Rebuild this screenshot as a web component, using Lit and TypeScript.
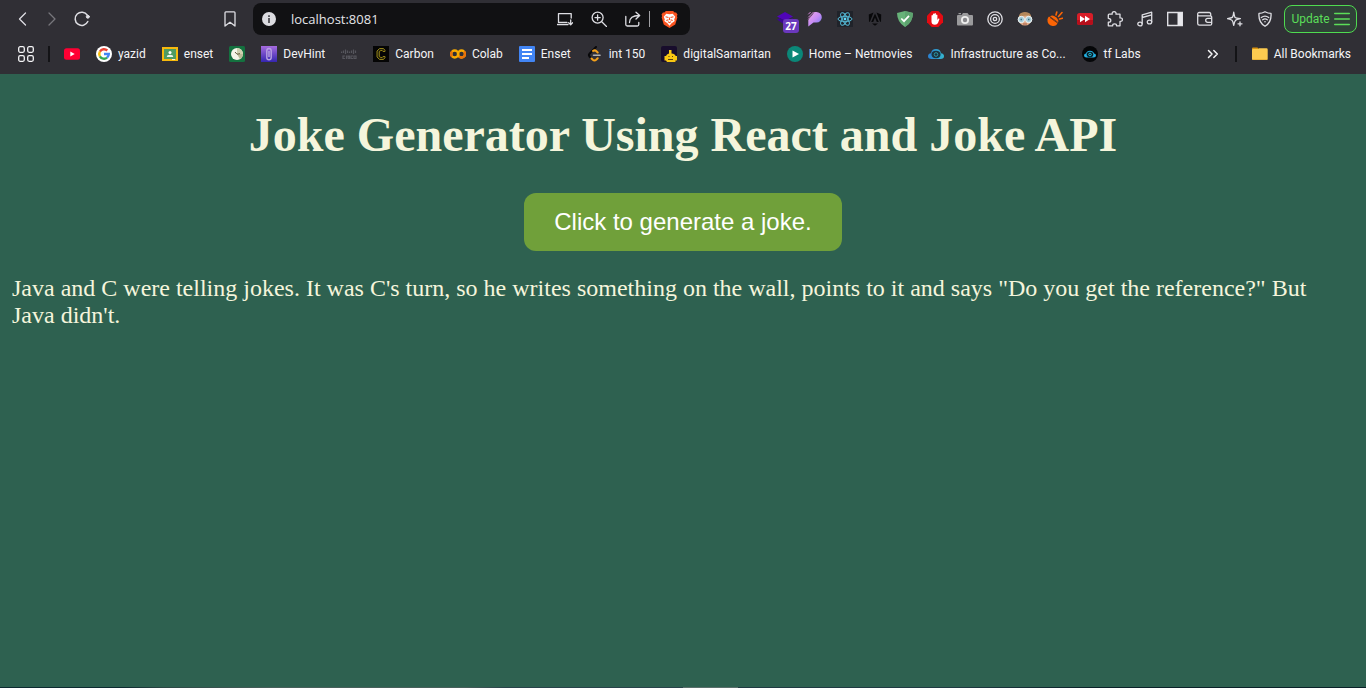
import { LitElement, html, css, svg } from "lit";
import { customElement, state } from "lit/decorators.js";

const line = (body: unknown, size = 16) => html`<svg viewBox="0 0 16 16" width=${size} height=${size} fill="none" stroke="currentColor" stroke-width="1.3" stroke-linecap="round" stroke-linejoin="round" aria-hidden="true">${body}</svg>`;
const art = (body: unknown, size = 16) => html`<svg viewBox="0 0 16 16" width=${size} height=${size} aria-hidden="true">${body}</svg>`;

const ui = {
  back: line(svg`<path d="M11.5 2 5.500 8l6 6"/>`),
  forward: line(svg`<path d="M5 2 11 8l-6 6"/>`),
  reload: line(svg`<path stroke-width="1.500" d="M13.800 10.500A6.600 6.600 0 1 1 13.300 4.200"/><circle cx="13.800" cy="5.700" r="1.500" fill="currentColor" stroke-width="1"/>`),
  bookmark: line(svg`<path d="M3 1.800q0-.9.900-.9h8.200q.9 0 .9.900v13.300L8 11.200l-5 3.900z"/>`),
  info: art(svg`<circle cx="8" cy="8" r="7" fill="#dcdce0"/><path d="M7 4.200h2v1.800H7zM7 7h2v5H7z" fill="#5b5b60"/>`),
  install: line(svg`<path d="M14.200 7V2.600H1.500v8.800h8M.5 13.500h10.500M13.700 9v4.700m-2-2 2 2 2-2M2 11.400h8"/>`),
  magnify: line(svg`<circle cx="6.600" cy="6.600" r="5.500"/><path d="M11 11l4.500 4.500M4 6.600h5.200M6.600 4v5.200"/>`),
  share: line(svg`<path d="M.8 5.500v8q0 1.500 1.500 1.500h10q1.500 0 1.500-1.500v-2M4.500 11.500q0-7 9.500-7M11 1.300l3.700 3.200L11 8"/>`),
  brave: art(svg`<path d="M4.600 0h6.800l1.400 1.500 1.400-.1 1.300 2-.5 1.400.4 1.400-2 6.400L8 16l-5.400-3.400-2-6.400L1 4.800.5 3.400l1.300-2 1.400.1z" fill="#fb5420"/><path d="M5 2.500l3 .5 3-.5 2.400 3-1 2.500.5 1.500-3 2L8 13.800 6.100 11.500l-3-2L3.600 8l-1-2.500z" fill="#fff"/><path d="M4.300 5.500l2.700.6M11.700 5.500L9 6.100M5 9l2-.7M11 9l-2-.7M8 6v2.500M6.500 10L8 11l1.500-1" stroke="#fb5420" stroke-width="1" fill="none"/>`, 17),
  apps: line(svg`<rect x=".7" y=".7" width="5.600" height="5.600" rx="1.500"/><rect x="9.700" y=".7" width="5.600" height="5.600" rx="1.500"/><rect x=".7" y="9.700" width="5.600" height="5.600" rx="1.500"/><rect x="9.700" y="9.700" width="5.600" height="5.600" rx="1.500"/>`),
  more: line(svg`<path stroke-width="1.500" d="M3.500 4.500 7 8l-3.500 3.500M8.800 4.500 12.300 8l-3.500 3.500"/>`),
  menu: line(svg`<path stroke-width="1.400" d="M.7 2.500h14.600M.7 8h14.600M.7 13.500h14.600"/>`),
  folder: art(svg`<path d="M0 2.500Q0 1.500 1 1.500h4.500l1.600 2H0z" fill="#d99410"/><path d="M0 3.800q0-.8.800-.8H6l1.200-.8h7.300q1.200 0 1.200 1.200V13q0 1-1 1H1q-1 0-1-1z" fill="#fccb50"/><path d="M1 13.500h14" stroke="#e9b43a"/>`),
};

const extensions: [string, unknown][] = [
  ["Layers", art(svg`<path d="M0 5.500 8 1l8 4.500L8 10z" fill="#5005b8"/><path d="M0 8.500l3-1.500 5 3 8-3v2L8 14z" fill="#3a0790"/>`)],
  ["Pieces", art(svg`<defs><linearGradient id="pp" x1="0" y1="0" x2="1" y2="1"><stop offset="0" stop-color="#f0a9e6"/><stop offset=".5" stop-color="#c78cf5"/><stop offset="1" stop-color="#6d7bf2"/></linearGradient></defs><path d="M7.500 1H9.500a5.300 5.300 0 0 1 0 10.600H6.500L1.300 15.500V9z" fill="url(#pp)"/><path d="M1.300 3.300 3.600 1M1.300 6.300 6.600 1M1.300 8.300 5 4.600" stroke="#d88bdc" stroke-width="1"/>`)],
  ["React Developer Tools", art(svg`<path d="M0 0h16v16H0z" fill="#20232a"/><g fill="none" stroke="#54b8d4"><ellipse cx="8" cy="8" rx="7" ry="2.700"/><ellipse cx="8" cy="8" rx="7" ry="2.700" transform="rotate(60 8 8)"/><ellipse cx="8" cy="8" rx="7" ry="2.700" transform="rotate(120 8 8)"/></g><circle cx="8" cy="8" r="1.400" fill="#61dafb"/>`)],
  ["Angular DevTools", art(svg`<path d="M1.800 3.500 6.500 1.500 3 10.500 2 11zM14.200 3.500 9.500 1.500l3.500 9 1 .5zM8 2.500l3.800 8.500H9.800L8 6.500 6.200 11H4.200zM5 12.500h6L8 14.800z" fill="#08080a"/>`)],
  ["AdGuard", art(svg`<path d="M8 0q4 .9 8 2-.2 9.500-8 14Q.2 11.500 0 2 4 .9 8 0z" fill="#67b279"/><path d="M8 0q4 .9 8 2-.2 9.500-8 14z" fill="#5da36f"/><path d="M4.300 7.500 7 10.200l5-5.400" fill="none" stroke="#fff" stroke-width="1.700"/>`)],
  ["Ad blocker", art(svg`<path d="M4.700 0h6.600L16 4.700v6.600L11.300 16H4.700L0 11.300V4.700z" fill="#e40b12"/><path d="M4.500 8V4.500q.8-1 1.400 0V3q.8-1 1.500 0v-.5q.8-1 1.500 0V4q.8-1 1.500 0v5l1-1.500q1.200-.4 1 .8L11 12Q10 13.800 8 13.800q-3.500 0-3.500-3z" fill="#fff"/>`)],
  ["Screenshot", art(svg`<path d="M1 4h3.500L6 2h4.500L12 4h3q1 0 1 1v8.500q0 1-1 1H1q-1 0-1-1V5q0-1 1-1zM1.500 2h2.500v1.300H1.500z" fill="#9a9a9c"/><circle cx="8" cy="9" r="4" fill="#eee"/><circle cx="8" cy="9" r="2.200" fill="#88888c"/>`)],
  ["Rings", line(svg`<circle cx="8" cy="8" r="7.200"/><circle cx="8" cy="8" r="4.400"/><circle cx="8" cy="8" r="1.700"/>`)],
  ["Persona", art(svg`<circle cx="8" cy="8" r="6.600" fill="#e0ac88"/><path d="M1.700 7Q1.500 1 8 1t6.300 6L12 4.500 4 5z" fill="#b4875a"/><circle cx="4.300" cy="8.500" r="3.200" fill="#a8ccd8" stroke="#edf3f4"/><circle cx="11.700" cy="8.500" r="3.200" fill="#a8ccd8" stroke="#edf3f4"/><path d="M3.500 8.500h1.500M11 8.500h1.500" stroke="#3b7284" stroke-width="1.500"/><path d="M6 13h4" stroke="#a65f4a"/>`)],
  ["Honey pot", art(svg`<path d="M2 5.500 10.800 11.500Q9.500 15.500 5.500 15 0 13.800.5 8.500q.3-2 1.500-3z" fill="#fb6405"/><path d="M3 5.200Q6 3.500 9 6.300t2.200 5z" fill="#fb6405"/><path d="M3 6.500l7.500 5.500" stroke="#4a2818" stroke-width=".8"/><path d="M9 4 9.800 1M11.500 5.500 15 1.500M12.500 8l3-.7" stroke="#fb6405" stroke-width="1.600" stroke-linecap="round"/>`)],
  ["Video speed", art(svg`<rect y="2" width="16" height="12" rx="2.500" fill="#d81e28"/><path d="M0 9h16v2.500q0 2.500-2.500 2.500h-11Q0 14 0 11.500z" fill="#b70f1b"/><path d="M3 4.800 8 8l-5 3.200zM8 4.800 13 8l-5 3.200z" fill="#fff"/>`)],
  ["Extensions", line(svg`<path d="M2.200 3.200h3q-.4-2.500 1.900-2.500t1.900 2.500h4v3.700q2.400-.3 2.400 1.700T13 10.300v4.500H9.500q.2-2-1.900-2t-1.900 2H1.300v-3.600q2.500.2 2.500-1.800T1.300 7.300V4.100q0-.9.900-.9z"/>`)],
  ["Music", line(svg`<path d="M5.200 12.500V3.800L14.700 1.200v9.500M5.200 6.500l9.500-2.600"/><ellipse cx="3" cy="13" rx="2.200" ry="1.900"/><ellipse cx="12.500" cy="11" rx="2.200" ry="1.900"/>`)],
  ["Sidebar", art(svg`<path d="M.7 1.500h14.600v13H.7z" fill="none" stroke="#dedee3" stroke-width="1.400"/><path d="M10.500 1.500h4.800v13h-4.800z" fill="#e8e8ec"/>`)],
  ["Wallet", line(svg`<path d="M13.700 4.800V3q0-1.500-1.500-1.500H2.300Q.7 1.500.7 3v9.500q0 1.700 1.700 1.700h10.800q1.500 0 1.500-1.500V6.300q0-1.500-1.500-1.500H2Q.7 4.800.7 3.500M14.500 7.300H10.700a2 2 0 0 0 0 4h3.800"/>`)],
  ["Leo AI", line(svg`<path d="M6.700 1.200q.8 4.700 1.400 5.300t5.300 1.200q-4 .8-4.800 1.600-1 1-1.900 5-.8-4-1.600-4.900T.5 7.700q3.800-.6 4.800-1.300 1-.8 1.400-5.200z"/><path d="M13 10.800v4M11 12.800h4"/>`)],
  ["VPN", line(svg`<path d="M8 .7q3 1.600 6 1.600.8 9-6 13-6.800-4-6-13 3 0 6-1.600z"/><path d="M4.300 6.500Q8 3.700 11.700 6.500M5.700 8.800q2.300-1.800 4.600 0"/><circle cx="8" cy="10.800" r=".8" fill="currentColor" stroke="none"/>`)],
];

const bookmarks: { label?: string; title: string; icon: unknown }[] = [
  { title: "YouTube", icon: art(svg`<rect y="2.300" width="16" height="11.400" rx="2.500" fill="#ff0033"/><path d="M6.300 5.500 10.700 8l-4.400 2.500z" fill="#fff"/>`) },
  { label: "yazid", title: "yazid", icon: art(svg`<circle cx="8" cy="8" r="8" fill="#fff"/><g fill="none" stroke-width="2.400"><path d="M11.300 4.500A4.800 4.800 0 0 0 3.900 5.600" stroke="#ea4335"/><path d="M3.900 5.600a4.800 4.800 0 0 0 0 4.800" stroke="#fbbc05"/><path d="M3.900 10.400a4.800 4.800 0 0 0 7.200 1.200" stroke="#34a853"/><path d="M11.100 11.600Q12.800 10 12.800 8H8" stroke="#4285f4"/></g>`) },
  { label: "enset", title: "enset", icon: art(svg`<path d="M0 1h16v14H0z" fill="#f7b90d"/><path d="M2 3h12v10H2z" fill="#4e9b62"/><circle cx="8" cy="6.500" r="1.500" fill="#fff"/><path d="M4.800 11q0-2.200 3.200-2.200t3.200 2.200z" fill="#e8f3eb"/><path d="M10 13h3v1h-3z" fill="#fff3ca"/>`) },
  { title: "Clock", icon: art(svg`<rect width="16" height="16" rx="1.500" fill="#14713f"/><circle cx="8" cy="8" r="6" fill="#f5f5e9"/><path d="M8 8V2a6 6 0 0 1 6 6z" fill="#cfd0b0"/><path d="M8 8h6a6 6 0 0 1-3 5.200z" fill="#b9ba98"/><path d="M6 6l2 2.200 3-.5" stroke="#655d3e" fill="none"/>`) },
  { label: "DevHint", title: "DevHint", icon: art(svg`<defs><linearGradient id="dh" x1="0" y1="0" x2="0" y2="1"><stop stop-color="#a66cdf"/><stop offset="1" stop-color="#3526b0"/></linearGradient></defs><path d="M0 0h16v16H0z" fill="url(#dh)"/><path d="M5.800 10.500V4.700a2.200 2.200 0 0 1 4.400 0v6.800a2.200 2.200 0 0 1-4.400 0zM8 5v6" stroke="#b7a2e2" stroke-width="1.400" fill="none"/>`) },
  { title: "Cisco", icon: art(svg`<g stroke="#56565d" stroke-width="1.200"><path d="M.6 5.500v1.500M2.500 4.500V7M4.500 3.500V8M6.500 4.500V7M8.500 5.500V7M10.500 4.500V7M12.500 3.500V8M14.500 4.500V7"/><path fill="none" d="M4 10H2v2.500h2M5.500 9.500V13M9 10H7v1.200h1.500v1.300H6.700M12 10h-2v2.500h2M13 10h2v2.500h-2z"/></g>`) },
  { label: "Carbon", title: "Carbon", icon: art(svg`<path d="M0 0h16v16H0z" fill="#050505"/><path d="M12 5.500V4.300L10.500 2.500h-4L4 5v6l2.500 2.500h4l1.500-1.800v-1.200h-2l-.8 1H7.500L6.300 10V6l1.200-1.500h1.700l.8 1z" fill="#24200a" stroke="#8f8018"/>`) },
  { label: "Colab", title: "Colab", icon: art(svg`<g fill="none" stroke-width="2.400"><circle cx="4.700" cy="8" r="3.500" stroke="#f9ab00"/><path d="M2.200 10.500a3.500 3.500 0 0 1 0-5" stroke="#e8710a"/><circle cx="11.500" cy="8" r="3.500" stroke="#f9ab00"/><path d="M14 5.500a3.500 3.500 0 0 1-5 5" stroke="#e8710a"/></g>`) },
  { label: "Enset", title: "Enset", icon: art(svg`<rect width="16" height="16" rx="1" fill="#4285f4"/><path d="M3 4h10M3 8h10M3 12h7" stroke="#fff" stroke-width="1.900"/>`) },
  { label: "int 150", title: "int 150", icon: art(svg`<path d="M9 1 2.500 7.800q-1.200 1.300 0 2.700l1.500 1.700" fill="none" stroke="#09090b" stroke-width="2" stroke-linecap="round"/><path d="M6 5q1.700-1.300 3.200.1l1.500 1.400M4.500 12.500l1.300 1.200q1.700 1.500 3.400 0l1.500-1.500" fill="none" stroke="#f5a11b" stroke-width="2" stroke-linecap="round"/><path d="M6.500 9.200h6.500" stroke="#b3b3b3" stroke-width="1.600" stroke-linecap="round"/>`) },
  { label: "digitalSamaritan", title: "digitalSamaritan", icon: art(svg`<rect width="16" height="16" rx="2" fill="#180d2c"/><path d="M8 4h2.500v3.500q4 .5 4 2.500H16v4.500h-1.500V16H6l-1-1.500H3.500V10H5q.5-2 3-2.500z" fill="#f9c712"/><path d="M7.500 10.500h1M11 10.500h1M7 13.500h5" stroke="#5b4110"/>`) },
  { label: "Home – Netmovies", title: "Home – Netmovies", icon: art(svg`<circle cx="8" cy="8" r="8" fill="#0b8778"/><path d="M5.500 4.500 12 8l-6.500 3.500z" fill="#fff"/>`) },
  { label: "Infrastructure as Co...", title: "Infrastructure as Code", icon: art(svg`<defs><linearGradient id="cl"><stop stop-color="#2a7fd0"/><stop offset="1" stop-color="#35b6cf"/></linearGradient></defs><path d="M3.500 13Q0 12.800 0 10.200T3 7.300Q3.700 3 8 3t5 4.300q3 .3 3 2.900T12.500 13z" fill="url(#cl)"/><ellipse cx="8" cy="8.500" rx="4.500" ry="3.700" fill="#1c3440"/><circle cx="8" cy="8.500" r="1.800" fill="none" stroke="#2e98a8"/>`) },
  { label: "tf Labs", title: "tf Labs", icon: art(svg`<circle cx="8" cy="8" r="8" fill="#050608"/><path d="M4.500 11.500q-2.500 0-2.500-2t2-2Q4.800 4.700 8 4.700t4 2.800q2 0 2 2t-2.500 2z" fill="#22aee0"/><ellipse cx="8" cy="8.500" rx="3.300" ry="2.700" fill="#071c26"/><circle cx="8" cy="8.500" r="1.300" fill="none" stroke="#25bbd2"/>`) },
];

@customElement("browser-toolbar")
export class BrowserToolbar extends LitElement {
  static styles = css`
    :host { display: block; background: #302f35; color: #dedee3; font: 12px/16px Roboto, "Noto Sans", sans-serif; }
    svg { display: block; flex: none; }
    button { border: 0; padding: 0; margin: 0; background: none; color: inherit; font: inherit; }
    .bar { display: flex; align-items: center; height: 38px; padding: 0 9px 0 7px; }
    .tool { display: flex; flex: none; align-items: center; justify-content: center; width: 30px; height: 30px; position: relative; }
    .dim { color: #77767c; }
    .lead { flex: 118 1 0; }
    .trail { flex: 80 1 0; }
    .address { flex: 417 1 0; min-width: 0; display: flex; align-items: center; height: 32px; margin-left: 8px; padding: 0 12px 0 8px; box-sizing: border-box; border-radius: 8px; background: #111113; }
    .address input { flex: 1; min-width: 0; margin: 0 0 0 14px; padding: 0; border: 0; outline: 0; background: none; color: #e4e4e8; font: 13px/20px "Open Sans", "Noto Sans", sans-serif; }
    .actions { display: flex; gap: 18px; padding-right: 8px; }
    .rule { width: 1px; height: 16px; background: #a0a0a4; margin-right: 11px; }
    .badge { position: absolute; left: 13px; top: 15px; width: 16px; height: 14px; border-radius: 3px; background: #6a38bd; color: #fff; font: 700 10px/14px "Open Sans", sans-serif; text-align: center; }
    .update { display: flex; align-items: center; justify-content: center; gap: 4px; box-sizing: border-box; flex: none; width: 73px; height: 28px; margin-left: 4px; border: 1px solid #4fdb50; border-radius: 8px; background: #304138; color: #5bde58; }
    .shelf { display: flex; align-items: center; height: 32px; padding: 0 15px 4px 18px; color: #f4f4f6; }
    .split { width: 2px; height: 16px; background: #131316; }
    .apps { margin-right: 14px; }
    .marks { display: flex; flex: 1; min-width: 0; overflow: hidden; gap: 16px; margin-left: 14px; }
    .mark { display: flex; flex: none; align-items: center; gap: 6px; color: inherit; text-decoration: none; white-space: nowrap; }
    .more { margin-right: 14px; }
    .all { margin-left: 15px; }
  `;

  render() {
    return html`
      <div class="bar">
        <button class="tool" aria-label="Back">${ui.back}</button>
        <button class="tool dim" aria-label="Forward">${ui.forward}</button>
        <button class="tool" aria-label="Reload">${ui.reload}</button>
        <span class="lead"></span>
        <button class="tool" aria-label="Bookmark this page">${ui.bookmark}</button>
        <div class="address">
          ${ui.info}
          <input aria-label="Address" value="localhost:8081" spellcheck="false" />
          <div class="actions">
            <button aria-label="Install app">${ui.install}</button>
            <button aria-label="Zoom">${ui.magnify}</button>
            <button aria-label="Share">${ui.share}</button>
          </div>
          <span class="rule"></span>
          <button aria-label="Brave Shields">${ui.brave}</button>
        </div>
        <span class="trail"></span>
        ${extensions.map(([name, icon], i) => html`<button class="tool" aria-label=${name}>${icon}${i === 0 ? html`<span class="badge">27</span>` : ""}</button>`)}
        <button class="update">Update ${ui.menu}</button>
      </div>
      <nav class="shelf" aria-label="Bookmarks">
        <button class="apps" aria-label="Apps">${ui.apps}</button>
        <span class="split"></span>
        <div class="marks">
          ${bookmarks.map((b) => html`<a class="mark" href="#" aria-label=${b.title}>${b.icon}${b.label ? html`<span>${b.label}</span>` : ""}</a>`)}
        </div>
        <button class="more" aria-label="More bookmarks">${ui.more}</button>
        <span class="split"></span>
        <a class="mark all" href="#">${ui.folder}<span>All Bookmarks</span></a>
      </nav>
    `;
  }
}

const jokes = [
  `Java and C were telling jokes. It was C's turn, so he writes something on the wall, points to it and says "Do you get the reference?" But Java didn't.`,
  "There are only 10 kinds of people in this world: those who know binary and those who don't.",
];

@customElement("app-root")
export class AppRoot extends LitElement {
  static styles = css`
    :host { display: flex; flex-direction: column; min-height: 100vh; background: #2e6150; color: #f5f5dc; font-family: "Liberation Serif", serif; }
    main { flex: 1; padding: 12px; }
    h1 { margin: 20px 0 30px; font-size: 48px; line-height: 57px; text-align: center; }
    .generate { display: block; margin: 0 auto; padding: 15px 30px; border: 0; border-radius: 12px; background: #70a03a; color: #fff; font: 24px/28px "Liberation Sans", sans-serif; }
    .joke { margin: 24px 0 0; font-size: 24px; line-height: 27px; }
    .edge { height: 1px; background: linear-gradient(90deg, #0c2a30 0 9%, #2a4744 12%, #47605b 20% 34%, #28434a 37% 50%, #5a706c 50% 54%, #1f3a42 54% 70%, #0a2229 80%); }
  `;

  @state() private index = 0;

  render() {
    return html`
      <browser-toolbar></browser-toolbar>
      <main>
        <h1>Joke Generator Using React and Joke API</h1>
        <button class="generate" @click=${() => (this.index = (this.index + 1) % jokes.length)}>Click to generate a joke.</button>
        <p class="joke">${jokes[this.index]}</p>
      </main>
      <div class="edge"></div>
    `;
  }
}
